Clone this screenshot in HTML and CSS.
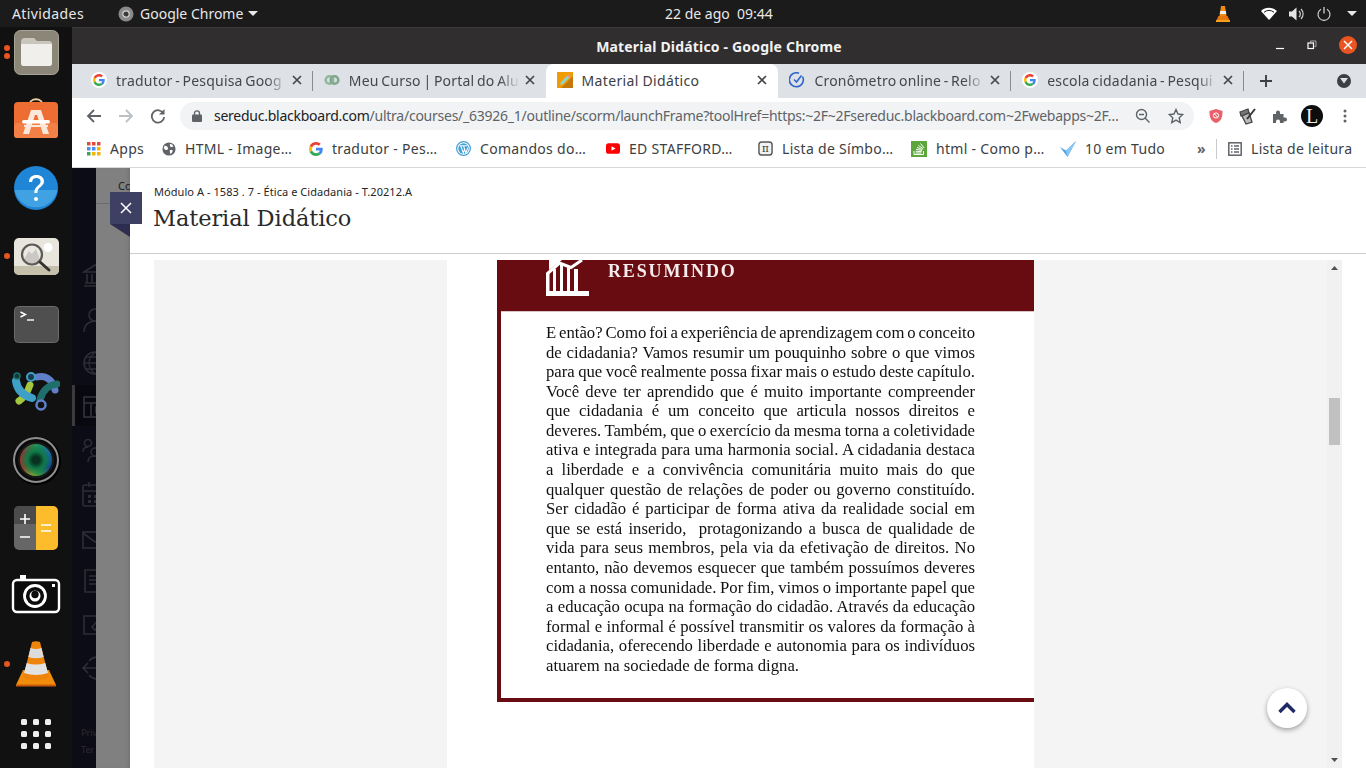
FILE: index.html
```html
<!DOCTYPE html>
<html lang="pt-BR">
<head>
<meta charset="utf-8">
<title>Material Didático - Google Chrome</title>
<link rel="stylesheet" href="styles.css">
</head>
<body>
<svg class="defs" width="0" height="0" aria-hidden="true">
  <defs>
    <symbol id="g" viewBox="0 0 48 48">
      <path fill="#EA4335" d="M24 9.5c3.54 0 6.71 1.22 9.21 3.6l6.85-6.85C35.9 2.38 30.47 0 24 0 14.62 0 6.51 5.38 2.56 13.22l7.98 6.19C12.43 13.72 17.74 9.5 24 9.5z"/>
      <path fill="#4285F4" d="M46.98 24.55c0-1.57-.15-3.09-.38-4.55H24v9.02h12.94c-.58 2.96-2.26 5.48-4.78 7.18l7.73 6c4.51-4.18 7.09-10.36 7.09-17.65z"/>
      <path fill="#FBBC05" d="M10.53 28.59c-.48-1.45-.76-2.99-.76-4.59s.27-3.14.76-4.59l-7.98-6.19C.92 16.46 0 20.12 0 24c0 3.88.92 7.54 2.56 10.78l7.97-6.19z"/>
      <path fill="#34A853" d="M24 48c6.48 0 11.93-2.13 15.89-5.81l-7.73-6c-2.15 1.45-4.92 2.3-8.16 2.3-6.26 0-11.57-4.22-13.47-9.91l-7.98 6.19C6.51 42.62 14.62 48 24 48z"/>
    </symbol>
    <symbol id="x" viewBox="0 0 10 10">
      <path d="M1 1l8 8M9 1l-8 8" stroke="#45474b" stroke-width="1.7" fill="none"/>
    </symbol>
  </defs>
</svg>

<header class="topbar">
  <span class="top-left">Atividades</span>
  <div class="top-app">
    <svg width="16" height="16" viewBox="0 0 16 16"><circle cx="8" cy="8" r="7.5" fill="#8a8a8a"/><circle cx="8" cy="8" r="3.2" fill="#3a3a3a" stroke="#d8d8d8" stroke-width="1.2"/></svg>
    <span>Google Chrome</span>
    <i class="caret"></i>
  </div>
  <div class="top-clock">22 de ago&nbsp; 09:44</div>
  <div class="top-tray">
    <svg class="tray-vlc" width="16" height="18" viewBox="0 0 16 18"><path d="M6 1h4l1.500 10h-7z" fill="#f08a10"/><path d="M5.200 6h5.600l.5 3H4.700z" fill="#eee"/><path d="M3.500 11L1 16.500h14L12.500 11z" fill="#e8770c"/><path d="M1 15h14v2H1z" fill="#f7a01d"/></svg>
    <svg class="tray-wifi" width="16" height="13" viewBox="0 0 16 13"><path d="M0 4a11.500 11.500 0 0 1 16 0l-8 9z" fill="#fff"/><path d="M3 5.300a7.500 7.500 0 0 1 10 0" fill="none" stroke="#1b1b1b" stroke-width="1"/></svg>
    <svg class="tray-vol" width="16" height="14" viewBox="0 0 16 14"><path d="M0 4.500h3L7.500.5v13L3 9.500H0z" fill="#e6e6e6"/><path d="M10 4a4 4 0 0 1 0 6M12 2a7 7 0 0 1 0 10" fill="none" stroke="#d0d0d0" stroke-width="1.200"/></svg>
    <svg class="tray-pow" width="14" height="14" viewBox="0 0 14 14"><path d="M4 2.200a6 6 0 1 0 6 0" fill="none" stroke="#ddd" stroke-width="1.100"/><path d="M7 0v6.500" stroke="#ddd" stroke-width="1.200"/></svg>
    <i class="caret"></i>
  </div>
</header>

<div class="desktop">
  <nav class="dock">
    <div class="dock-item">
      <i class="run-dot d1"></i><i class="run-dot d2"></i>
      <svg width="45" height="45" viewBox="0 0 45 45"><rect x="0.500" y="0.500" width="44" height="44" rx="6" fill="#8b8678"/><rect x="0.500" y="0.500" width="44" height="44" rx="6" fill="none" stroke="#a8a498" stroke-width="1"/><path d="M7 12a4 4 0 0 1 4-4h9l3 3h12a3 3 0 0 1 3 3v19a3 3 0 0 1-3 3H10a3 3 0 0 1-3-3z" fill="#c9c6bd"/><path d="M7 14h31v19a3 3 0 0 1-3 3H10a3 3 0 0 1-3-3z" fill="#f1efeb"/></svg>
    </div>
    <div class="dock-item">
      <svg width="44" height="44" viewBox="0 0 44 44"><path d="M15 8c0-9 14-9 14 0" fill="none" stroke="#e9cfa2" stroke-width="1.800"/><rect x="0" y="4" width="44" height="36" rx="4" fill="#ed6d33"/><rect x="0" y="25" width="44" height="15" rx="3" fill="#f27f46"/><path d="M17 12h10l8 24h-6l-6-19h-2l-6 19H9z" fill="#fbe8da"/><rect x="8" y="22" width="28" height="3.500" rx="1.700" fill="#fff"/><rect x="10" y="27" width="24" height="2" fill="#fbe8da"/></svg>
    </div>
    <div class="dock-item">
      <svg width="44" height="44" viewBox="0 0 44 44"><circle cx="22" cy="22" r="22" fill="#1f85d6"/><path d="M0.500 24h43a22 22 0 0 1-43 0z" fill="#41a2e3"/><path d="M15 16c0-4.500 3-7 7.500-7 4.400 0 7.500 2.500 7.500 6.300 0 5.700-6.700 5.500-6.700 11.700h-3c0-7.500 6.300-7.500 6.300-11.600 0-2-1.700-3.400-4.200-3.400-2.600 0-4.100 1.600-4.300 4z" fill="#fff"/><circle cx="22" cy="33" r="2" fill="#fff"/></svg>
    </div>
    <div class="dock-item">
      <i class="run-dot d3"></i>
      <svg width="45" height="37" viewBox="0 0 45 37"><rect width="45" height="37" rx="5" fill="#e8e6dc"/><path d="M0 28h45v4a5 5 0 0 1-5 5H5a5 5 0 0 1-5-5z" fill="#c5c0ac"/><circle cx="34" cy="9.500" r="4.500" fill="#fff"/><circle cx="18" cy="16.500" r="10" fill="#e9e8e2"/><path d="M10 21l5-8 3 3 4-5 4 11a10 10 0 0 1-16-1z" fill="#c9c8c2"/><circle cx="18" cy="16.500" r="10" fill="none" stroke="#5c5a55" stroke-width="2.200"/><path d="M26 24l9 8" stroke="#33312e" stroke-width="3" stroke-linecap="round"/></svg>
    </div>
    <div class="dock-item">
      <svg width="45" height="37" viewBox="0 0 45 37"><rect x="0.500" y="0.500" width="44" height="36" rx="4" fill="#4f4f4f" stroke="#6a6a6a"/><path d="M6.500 6l5 2.500-5 2.500" fill="none" stroke="#fff" stroke-width="1.400"/><path d="M13 14h7" stroke="#fff" stroke-width="1.400"/></svg>
    </div>
    <div class="dock-item">
      <svg width="48" height="44" viewBox="0 0 48 44"><path d="M18 15c-2 6-5 12-11 16" fill="none" stroke="#a3c83f" stroke-width="7" stroke-linecap="round"/><path d="M25 7c7-2 15 1 18 13" fill="none" stroke="#5f80c9" stroke-width="7" stroke-linecap="round"/><path d="M4 11c1 8 6 14 16 17" fill="none" stroke="#3e9fc9" stroke-width="8" stroke-linecap="round"/><path d="M45 14c-9 1-15 7-17 16" fill="none" stroke="#1f6f6c" stroke-width="7" stroke-linecap="round"/><circle cx="5" cy="6" r="3" fill="#0e3b3a" stroke="#1f6f6c" stroke-width="1.500"/><circle cx="19" cy="7" r="4" fill="#173b4d" stroke="#3e9fc9" stroke-width="2"/><circle cx="29" cy="35" r="4.500" fill="#111" stroke="#5f80c9" stroke-width="2.500"/></svg>
    </div>
    <div class="dock-item">
      <div class="lens"><i></i></div>
    </div>
    <div class="dock-item">
      <svg width="44" height="44" viewBox="0 0 44 44"><path d="M5 0h17v44H5a5 5 0 0 1-5-5V5a5 5 0 0 1 5-5z" fill="#666"/><path d="M5 0h17v18H0V5a5 5 0 0 1 5-5z" fill="#4b4b4b"/><path d="M22 0h17a5 5 0 0 1 5 5v34a5 5 0 0 1-5 5H22z" fill="#fdbc2c"/><path d="M6 13h10M11 8v10M6 31h10" stroke="#fff" stroke-width="1.600"/><path d="M27 19h10M27 25h10" stroke="#fff" stroke-width="1.600"/></svg>
    </div>
    <div class="dock-item">
      <svg width="50" height="44" viewBox="0 0 50 44"><rect x="2" y="6" width="46" height="32" rx="4" fill="#0c0c0c" stroke="#fff" stroke-width="2.400"/><rect x="9" y="1" width="6" height="5" fill="#fff"/><circle cx="24" cy="22" r="10.500" fill="none" stroke="#fff" stroke-width="2.800"/><circle cx="24" cy="22" r="5.500" fill="#fff"/><circle cx="24" cy="20.500" r="3.700" fill="#0c0c0c"/><rect x="41" y="10" width="3" height="3" fill="#fff"/></svg>
    </div>
    <div class="dock-item">
      <i class="run-dot d4"></i>
      <svg width="40" height="46" viewBox="0 0 40 46"><path d="M7 29L0 44h40l-7-15z" fill="#f28d0c"/><path d="M0 43.500h40V45.500H0z" fill="#c9590a"/><path d="M16 1q4-1.500 8 0l9 36q-13 5-26 0z" fill="#ee840a"/><path d="M14.500 7q5.500 2 11 0l2.200 9q-7.700 2.500-15.400 0z" fill="#dcdcdc"/><path d="M10.700 22q9.300 3 18.600 0l2.700 10q-12 4-24 0z" fill="#e2e2e2"/></svg>
    </div>
    <div class="dock-item">
      <div class="apps-grid"><i></i><i></i><i></i><i></i><i></i><i></i><i></i><i></i><i></i></div>
    </div>
  </nav>

  <div class="window">
    <div class="titlebar">
      <span class="title">Material Didático - Google Chrome</span>
      <div class="win-controls">
        <svg width="10" height="10" viewBox="0 0 10 10"><path d="M1 8.500h8" stroke="#fff" stroke-width="1.200"/></svg>
        <svg width="10" height="10" viewBox="0 0 10 10"><rect x="1" y="3" width="5.500" height="5.500" fill="none" stroke="#fff" stroke-width="1.200"/><path d="M3.500 2.500V1h5.500v5.500H7.500" fill="none" stroke="#aaa"/></svg>
        <span class="win-close"><svg width="18" height="18" viewBox="0 0 18 18"><path d="M5 5l8 8M13 5l-8 8" stroke="#fff" stroke-width="1.500"/></svg></span>
      </div>
    </div>

    <div class="tabstrip">
      <div class="tab">
        <span class="fav-disc"><svg width="12" height="12"><use href="#g"/></svg></span>
        <span class="tab-title">tradutor - Pesquisa Goog</span>
        <svg class="tab-x" width="10" height="10"><use href="#x"/></svg>
      </div>
      <div class="tab">
        <svg class="fav" width="16" height="16" viewBox="0 0 16 16"><circle cx="5.500" cy="8" r="3.800" fill="none" stroke="#8fb89f" stroke-width="2.600"/><circle cx="10.500" cy="8" r="3.800" fill="none" stroke="#7fa68f" stroke-width="2.600"/></svg>
        <span class="tab-title">Meu Curso | Portal do Alu</span>
        <svg class="tab-x" width="10" height="10"><use href="#x"/></svg>
      </div>
      <div class="tab tab-active">
        <svg class="fav" width="16" height="16" viewBox="0 0 16 16"><rect width="16" height="16" fill="#f09c05"/><path d="M16 4v12H4z" fill="#c4780a"/><path d="M3 13l1-3 7-7 2 2-7 7z" fill="#8fd6c8"/><path d="M10 4l2 2 1.500-1.500-2-2z" fill="#e88ea0"/></svg>
        <span class="tab-title">Material Didático</span>
        <svg class="tab-x" width="10" height="10"><use href="#x"/></svg>
      </div>
      <div class="tab">
        <svg class="fav" width="16" height="16" viewBox="0 0 16 16"><path d="M13.500 4.500A7 7 0 1 1 10 1.300" fill="none" stroke="#2f66d0" stroke-width="1.600"/><path d="M5 7.500l2.500 2.500 5-6.500" fill="none" stroke="#2f66d0" stroke-width="1.600"/></svg>
        <span class="tab-title">Cronômetro online - Relo</span>
        <svg class="tab-x" width="10" height="10"><use href="#x"/></svg>
      </div>
      <div class="tab">
        <span class="fav-disc"><svg width="12" height="12"><use href="#g"/></svg></span>
        <span class="tab-title">escola cidadania - Pesqui</span>
        <svg class="tab-x" width="10" height="10"><use href="#x"/></svg>
      </div>
      <svg class="tab-new" width="14" height="14" viewBox="0 0 14 14"><path d="M7 1v12M1 7h12" stroke="#3c4043" stroke-width="1.900"/></svg>
      <span class="tab-search"><svg width="8" height="6" viewBox="0 0 8 6"><path d="M0 0h8L4 5.500z" fill="#dee1e6"/></svg></span>
    </div>

    <div class="toolbar">
      <svg class="tb-icon" width="16" height="16" viewBox="0 0 16 16"><path d="M15 8H2M8 2L2 8l6 6" fill="none" stroke="#5f6368" stroke-width="1.800"/></svg>
      <svg class="tb-icon" width="16" height="16" viewBox="0 0 16 16"><path d="M1 8h13M8 2l6 6-6 6" fill="none" stroke="#bcc0c4" stroke-width="1.800"/></svg>
      <svg class="tb-icon" width="16" height="16" viewBox="0 0 16 16"><path d="M13.500 5.500A6.200 6.200 0 1 0 14.200 9" fill="none" stroke="#5f6368" stroke-width="1.800"/><path d="M14.500 1v5.500H9z" fill="#5f6368"/></svg>
      <div class="omnibox">
        <svg class="lock" width="10" height="12" viewBox="0 0 10 12"><rect y="4.500" width="10" height="7.500" rx="1" fill="#5f6368"/><path d="M2.500 5V3.300a2.500 2.500 0 0 1 5 0V5" fill="none" stroke="#5f6368" stroke-width="1.300"/></svg>
        <span class="url"><b>sereduc.blackboard.com</b>/ultra/courses/_63926_1/outline/scorm/launchFrame?toolHref=https:~2F~2Fsereduc.blackboard.com~2Fwebapps~2F…</span>
        <svg class="omni-zoom" width="16" height="16" viewBox="0 0 16 16"><circle cx="6.500" cy="6.500" r="5" fill="none" stroke="#5f6368" stroke-width="1.400"/><path d="M4 6.500h5M10 10l4.500 4.500" stroke="#5f6368" stroke-width="1.400"/></svg>
        <svg class="omni-star" width="16" height="16" viewBox="0 0 16 16"><path d="M8 1.500l2 4.500 4.800.5-3.600 3.200 1 4.800L8 12.100 3.800 14.500l1-4.800L1.200 6.500 6 6z" fill="none" stroke="#5f6368" stroke-width="1.400"/></svg>
      </div>
      <div class="ext-row">
        <svg width="16" height="16" viewBox="0 0 16 16"><path d="M8 1l6.500 2c0 6-1 10-6.500 12C2.500 13 1.500 9 1.500 3z" fill="#e8606a"/><circle cx="8" cy="7.500" r="2.600" fill="none" stroke="#fff" stroke-width="1"/><path d="M6.300 5.800l3.400 3.400" stroke="#fff"/></svg>
        <svg width="18" height="18" viewBox="0 0 18 18"><path d="M1 5l8-3 1 4-8 3z" fill="#777" stroke="#444" stroke-width="1.300"/><path d="M3 9l7-3 3 9-6 2z" fill="#bbb" stroke="#444" stroke-width="1.300"/><path d="M8 12l8-10" stroke="#333" stroke-width="2"/></svg>
        <svg width="16" height="16" viewBox="0 0 16 16"><path d="M1 6h3V4.500a2 2 0 0 1 4 0V6h3.500v3.500H13a2 2 0 0 1 0 4h-1.500V15H8v-1.500a2 2 0 0 0-4 0V15H1z" fill="#5f6368"/></svg>
        <span class="avatar">L</span>
        <svg class="kebab" width="4" height="14" viewBox="0 0 4 14"><circle cx="2" cy="2" r="1.500" fill="#5f6368"/><circle cx="2" cy="7" r="1.500" fill="#5f6368"/><circle cx="2" cy="12" r="1.500" fill="#5f6368"/></svg>
      </div>
    </div>

    <div class="bookmarks">
      <div class="bm">
        <svg width="14" height="14" viewBox="0 0 14 14"><g><rect width="3.500" height="3.500" fill="#e04a3f"/><rect x="5" width="3.500" height="3.500" fill="#e04a3f"/><rect x="10" width="3.500" height="3.500" fill="#e04a3f"/><rect y="5" width="3.500" height="3.500" fill="#4b8bf4"/><rect x="5" y="5" width="3.500" height="3.500" fill="#4b8bf4"/><rect x="10" y="5" width="3.500" height="3.500" fill="#f4b400"/><rect y="10" width="3.500" height="3.500" fill="#3ba55d"/><rect x="5" y="10" width="3.500" height="3.500" fill="#f4b400"/><rect x="10" y="10" width="3.500" height="3.500" fill="#f4b400"/></g></svg>
        <span>Apps</span>
      </div>
      <div class="bm">
        <svg width="14" height="14" viewBox="0 0 16 16"><circle cx="8" cy="8" r="7.500" fill="#5f6368"/><path d="M3 4l3 1 1 2-1 2-2 0-2-2zM9 2l3 1 1 2-3 1-1-2zM9 9l3 0 0 2-2 3-1-2z" fill="#fff"/></svg>
        <span>HTML - Image…</span>
      </div>
      <div class="bm">
        <svg width="14" height="14"><use href="#g"/></svg>
        <span>tradutor - Pes…</span>
      </div>
      <div class="bm">
        <svg width="15" height="15" viewBox="0 0 16 16"><circle cx="8" cy="8" r="7.300" fill="#fff" stroke="#3f9fd8" stroke-width="1.300"/><circle cx="8" cy="8" r="5.500" fill="#3f9fd8"/><path d="M3.800 5h8.400M5 5l2.800 8L9 9M8 5l2.500 8 2-6" fill="none" stroke="#fff" stroke-width="1.100"/></svg>
        <span>Comandos do…</span>
      </div>
      <div class="bm">
        <svg width="14" height="11" viewBox="0 0 16 12"><rect width="16" height="12" rx="3" fill="#f00"/><path d="M6.300 3.300v5.400L11 6z" fill="#fff"/></svg>
        <span>ED STAFFORD…</span>
      </div>
      <div class="bm">
        <svg width="15" height="15" viewBox="0 0 16 16"><rect x="1" y="1" width="14" height="14" rx="3" fill="#f2f2f2" stroke="#555" stroke-width="1.500"/><text class="pi" x="8" y="12" text-anchor="middle">π</text></svg>
        <span>Lista de Símbo…</span>
      </div>
      <div class="bm">
        <svg width="16" height="16" viewBox="0 0 16 16"><rect width="16" height="16" fill="#5ca73c"/><path d="M3 10v3.500h9.500V10" fill="none" stroke="#fff" stroke-width="1"/><path d="M4.500 12h6M4.700 10.200l6 .5M5.100 8.300l6 1.100M6 6.300l5.500 2.300M7.400 4.400l4.800 3.300M9.500 2.500l3.600 4.400" stroke="#fff" stroke-width="1"/></svg>
        <span>html - Como p…</span>
      </div>
      <div class="bm">
        <svg width="16" height="16" viewBox="0 0 16 16"><path d="M0 6l6 3.500L16 0 7.500 16z" fill="#54a5e8"/><path d="M6 9.500L16 0l-8.500 16z" fill="#8cc8f4"/></svg>
        <span>10 em Tudo</span>
      </div>
      <span class="bm-more">»</span>
      <i class="bm-sep"></i>
      <div class="bm">
        <svg width="14" height="14" viewBox="0 0 14 14"><rect x="0.800" y="0.800" width="12.400" height="12.400" fill="none" stroke="#5f6368" stroke-width="1.500"/><path d="M3 4h1.500M6 4h5M3 7h1.500M6 7h5M3 10h1.500M6 10h5" stroke="#5f6368" stroke-width="1.300"/></svg>
        <span>Lista de leitura</span>
      </div>
    </div>

    <main class="viewport">
      <aside class="bb-nav">
        <div class="nav-icons">
          <svg width="26" height="26" viewBox="0 0 26 26"><path d="M2 9L13 2l11 7zM2 23h22M5 11v9M10 11v9M16 11v9M21 11v9M3 20h20" fill="none" stroke="#2c2d36" stroke-width="1.600"/></svg>
          <svg width="26" height="26" viewBox="0 0 26 26"><circle cx="13" cy="8" r="6" fill="none" stroke="#2c2d36" stroke-width="1.600"/><path d="M2 25c0-7 5-11 11-11s11 4 11 11" fill="none" stroke="#2c2d36" stroke-width="1.600"/></svg>
          <svg width="26" height="26" viewBox="0 0 26 26"><circle cx="13" cy="13" r="11" fill="none" stroke="#2c2d36" stroke-width="1.600"/><path d="M2 13h22M13 2c-8 7-8 15 0 22M13 2c8 7 8 15 0 22M4 7h18M4 19h18" fill="none" stroke="#2c2d36" stroke-width="1.300"/></svg>
          <svg class="nav-cur" width="26" height="26" viewBox="0 0 26 26"><path d="M2 3h24v20H2zM2 9h24M9 9v14M14 13h8v6h-8z" fill="none" stroke="#33343e" stroke-width="1.600"/></svg>
          <svg width="26" height="26" viewBox="0 0 26 26"><circle cx="6" cy="6" r="3.500" fill="none" stroke="#2c2d36" stroke-width="1.500"/><circle cx="20" cy="6" r="3.500" fill="none" stroke="#2c2d36" stroke-width="1.500"/><circle cx="13" cy="15" r="4" fill="none" stroke="#2c2d36" stroke-width="1.500"/><path d="M1 15c0-3 2-5 5-5M6 25c0-4 3-6 7-6s7 2 7 6" fill="none" stroke="#2c2d36" stroke-width="1.500"/></svg>
          <svg width="26" height="26" viewBox="0 0 26 26"><rect x="1" y="4" width="24" height="21" rx="2" fill="none" stroke="#2c2d36" stroke-width="1.600"/><path d="M1 10h24M7 1v5M19 1v5" stroke="#2c2d36" stroke-width="1.600"/><path d="M6 14h3v3H6zM12 14h3v3h-3zM18 14h3v3h-3zM6 19h3v3H6zM12 19h3v3h-3z" fill="#2c2d36"/></svg>
          <svg width="26" height="26" viewBox="0 0 26 26"><rect x="1" y="8" width="24" height="16" fill="none" stroke="#2c2d36" stroke-width="1.600"/><path d="M1 9l12 9 12-9" fill="none" stroke="#2c2d36" stroke-width="1.600"/><circle cx="20" cy="4" r="5" fill="#2c2d36"/></svg>
          <svg width="26" height="26" viewBox="0 0 26 26"><path d="M3 2h22v22H3zM7 8h14M7 12h14M7 16h8" fill="none" stroke="#2c2d36" stroke-width="1.600"/></svg>
          <svg width="26" height="26" viewBox="0 0 26 26"><path d="M14 5H2v18h22V12M10 16L22 3l3 3-12 13z" fill="none" stroke="#2c2d36" stroke-width="1.600"/></svg>
          <svg width="26" height="26" viewBox="0 0 26 26"><path d="M7 6a11 11 0 1 1 0 14M1 13h16M6 8l-5 5 5 5" fill="none" stroke="#2c2d36" stroke-width="1.600"/></svg>
        </div>
        <div class="nav-legal"><span>Priv</span><span>Ter</span></div>
      </aside>
      <div class="scrim">
        <span class="scrim-text">Co</span>
        <i class="scrim-line"></i>
      </div>
      <section class="panel">
        <header class="panel-head">
          <div class="crumb">Módulo A - 1583 . 7 - Ética e Cidadania - T.20212.A</div>
          <h1 class="panel-title">Material Didático</h1>
        </header>
        <div class="panel-body">
          <div class="doc-area">
            <article class="page">
              <div class="card">
                <div class="card-head">
                  <svg class="card-icon" width="44" height="37" viewBox="0 0 44 37"><path d="M0 31h43v5H0z" fill="#fff"/><path d="M0 13h3.500v18H0zM7 9h3v22H7zM14 5h3v26h-3zM21 7h3v24h-3zM28 9h4v22h-4z" fill="#fff"/><path d="M1 14L13.500 3 25 7.500 36 0" fill="none" stroke="#fff" stroke-width="3"/><path d="M3 0h13L3 10z" fill="#fff"/></svg>
                  <span class="card-title">RESUMINDO</span>
                </div>
                <div class="card-body">
                  <p>E então? Como foi a experiência de aprendizagem com o conceito</p>
                  <p>de cidadania? Vamos resumir um pouquinho sobre o que vimos</p>
                  <p>para que você realmente possa fixar mais o estudo deste capítulo.</p>
                  <p>Você deve ter aprendido que é muito importante compreender</p>
                  <p>que cidadania é um conceito que articula nossos direitos e</p>
                  <p>deveres. Também, que o exercício da mesma torna a coletividade</p>
                  <p>ativa e integrada para uma harmonia social. A cidadania destaca</p>
                  <p>a liberdade e a convivência comunitária muito mais do que</p>
                  <p>qualquer questão de relações de poder ou governo constituído.</p>
                  <p>Ser cidadão é participar de forma ativa da realidade social em</p>
                  <p>que se está inserido,&nbsp; protagonizando a busca de qualidade de</p>
                  <p>vida para seus membros, pela via da efetivação de direitos. No</p>
                  <p>entanto, não devemos esquecer que também possuímos deveres</p>
                  <p>com a nossa comunidade. Por fim, vimos o importante papel que</p>
                  <p>a educação ocupa na formação do cidadão. Através da educação</p>
                  <p>formal e informal é possível transmitir os valores da formação à</p>
                  <p>cidadania, oferecendo liberdade e autonomia para os indivíduos</p>
                  <p class="last">atuarem na sociedade de forma digna.</p>
                </div>
              </div>
            </article>
          </div>
          <div class="scrollbar">
            <svg width="7" height="4" viewBox="0 0 7 4"><path d="M0 4h7L3.500 0z" fill="#505050"/></svg>
            <i class="thumb"></i>
            <svg width="7" height="4" viewBox="0 0 7 4"><path d="M0 0h7L3.500 4z" fill="#505050"/></svg>
          </div>
        </div>
        <button class="to-top" type="button" aria-label="Voltar ao topo"><svg width="18" height="12" viewBox="0 0 18 12"><path d="M1.500 10L9 2.500 16.500 10" fill="none" stroke="#1e2a68" stroke-width="3.400"/></svg></button>
      </section>
      <button class="close-btn" type="button" aria-label="Fechar"><svg width="12" height="12" viewBox="0 0 12 12"><path d="M1 1l10 10M11 1L1 11" stroke="#fff" stroke-width="1.500"/></svg></button>
    </main>
  </div>
</div>
</body>
</html>
```

FILE: styles.css
```css
* { box-sizing: border-box; }
html, body { margin: 0; padding: 0; }
body {
  width: 1366px;
  height: 768px;
  overflow: hidden;
  background: #111;
  font-family: "Noto Sans", "Open Sans", sans-serif;
  display: flex;
  flex-direction: column;
}
.defs { position: absolute; }

/* Top bar */
.topbar {
  flex: 0 0 27px;
  height: 27px;
  background: #1b1b1b;
  color: #e8e8e8;
  font-size: 14px;
  display: grid;
  grid-template-columns: 106px 540px 1fr auto;
  align-items: center;
  padding-left: 12px;
}
.top-left { white-space: nowrap; letter-spacing: 0.4px; }
.top-app { display: flex; align-items: center; gap: 6px; }
.top-app .caret { margin-left: -1.5px; }
.top-clock { font-size: 14px; padding-left: 7px; }
.top-tray { display: flex; align-items: center; padding-right: 9px; }
.tray-vlc { margin-right: 30px; }
.tray-wifi { margin-right: 12px; }
.tray-vol { margin-right: 12px; }
.tray-pow { margin-right: 12px; }
.caret {
  display: inline-block;
  width: 0; height: 0;
  border-left: 5px solid transparent;
  border-right: 5px solid transparent;
  border-top: 5px solid #e8e8e8;
  margin-left: 4px;
}

.desktop { flex: 1; display: flex; min-height: 0; }

/* Dock */
.dock {
  flex: 0 0 72px;
  background: #111;
  display: flex;
  flex-direction: column;
  gap: 24px;
  padding-top: 3px;
}
.dock-item {
  position: relative;
  height: 44px;
  display: flex;
  justify-content: center;
  align-items: center;
}
.dock-item svg { display: block; flex: none; }
.run-dot {
  position: absolute;
  left: 4px;
  width: 6px; height: 6px;
  border-radius: 50%;
  background: #e95420;
}
.d1 { top: 15px; }
.d2 { top: 23px; }
.d3 { top: 19px; }
.d4 { top: 19px; }
.lens {
  width: 46px; height: 46px;
  flex: none;
  border-radius: 50%;
  background: #0a0a0a;
  border: 2px solid #8f8f8f;
  box-shadow: 1px 1px 0 1px #000;
  padding: 3px;
}
.lens i {
  display: block;
  width: 100%; height: 100%;
  border-radius: 50%;
  border: 2px solid #1a1a1a;
  background:
    radial-gradient(circle, #08321f 0 16%, #0f7a48 38%, rgba(15, 122, 72, .55) 60%, transparent 76%),
    conic-gradient(#2aa55a, #2060d0 60deg, #1a2fb0 120deg, #3f9f40 165deg, #a8b030 195deg, #c42a20 240deg, #b52030 300deg, #2aa55a);
}
.apps-grid {
  display: grid;
  grid-template-columns: repeat(3, 6px);
  gap: 6px;
  padding-top: 4px;
}
.apps-grid i { width: 6px; height: 6px; border-radius: 1.500px; background: #eee; }

/* Chrome window */
.window { flex: 1; min-width: 0; display: flex; flex-direction: column; }
.titlebar {
  flex: 0 0 37px;
  background: #302e2f;
  border-top: 1px solid #3a3a3a;
  display: grid;
  grid-template-columns: 1fr;
  align-items: center;
  position: relative;
}
.title {
  text-align: center;
  font-size: 14px;
  font-weight: 700;
  letter-spacing: 0.18px;
  color: #f2f2f2;
}
.win-controls {
  position: absolute;
  right: 9px;
  top: 8px;
  display: flex;
  align-items: center;
  gap: 22px;
}
.win-close {
  width: 18px; height: 18px;
  border-radius: 50%;
  background: #e95420;
  display: flex;
}

.tabstrip {
  flex: 0 0 34px;
  background: #dee1e6;
  display: flex;
  align-items: stretch;
  padding-left: 8px;
  position: relative;
}
.tab {
  flex: 0 0 232.800px;
  min-width: 0;
  display: flex;
  align-items: center;
  padding: 0 11px 2px 11px;
  gap: 9px;
  font-size: 14px;
  letter-spacing: 0.2px;
  word-spacing: -1.2px;
  color: #45474b;
  position: relative;
  white-space: nowrap;
}
.tab::after {
  content: "";
  position: absolute;
  right: 0;
  top: 7px;
  bottom: 7px;
  width: 1px;
  background: #888b90;
}
.tab:nth-child(2)::after, .tab-active::after { display: none; }
.tab-active {
  background: #fff;
  border-radius: 8px 8px 0 0;
  color: #3c4043;
  letter-spacing: 0.33px;
  word-spacing: 0;
}
.fav { flex: none; }
.fav-disc {
  flex: none;
  width: 16px; height: 16px;
  border-radius: 50%;
  background: #fff;
  display: flex;
  align-items: center;
  justify-content: center;
}
.tab-title {
  flex: 1;
  min-width: 0;
  overflow: hidden;
  -webkit-mask-image: linear-gradient(90deg, #000 88%, transparent 100%);
  mask-image: linear-gradient(90deg, #000 88%, transparent 100%);
}
.tab-active .tab-title { -webkit-mask-image: none; mask-image: none; }
.tab-x { flex: none; margin-left: -4px; }
.tab-new { align-self: center; margin-left: 15px; }
.tab-search {
  align-self: center;
  width: 14px; height: 14px;
  margin-left: 64px;
  border-radius: 50%;
  background: #3c4043;
  display: flex;
  align-items: center;
  justify-content: center;
}

.toolbar {
  flex: 0 0 35px;
  background: #fff;
  display: flex;
  align-items: center;
  padding-left: 14px;
  gap: 16px;
}
.tb-icon { flex: none; }
.omnibox {
  flex: 0 0 1014px;
  height: 28px;
  margin-left: -2px;
  background: #f1f3f4;
  border-radius: 14px;
  display: flex;
  align-items: center;
  padding-left: 12px;
  font-size: 14px;
  color: #5f6368;
}
.lock { flex: none; margin-right: 12px; }
.url { flex: 0 0 905px; min-width: 0; white-space: nowrap; overflow: hidden; letter-spacing: -0.25px; }
.url b { font-weight: 400; color: #202124; }
.omni-zoom { flex: none; margin-left: 16px; }
.omni-star { flex: none; margin-left: 17px; }
.ext-row {
  display: flex;
  align-items: center;
  gap: 15px;
  margin-left: -2px;
}
.avatar {
  width: 22px; height: 22px;
  margin-left: -2px;
  border-radius: 50%;
  background: #0d0d0d;
  color: #eee;
  font-family: "Liberation Serif", serif;
  font-size: 20px;
  line-height: 22px;
  text-align: center;
}
.kebab { margin-left: 5px; }

.bookmarks {
  flex: 0 0 35px;
  background: #fff;
  border-bottom: 1px solid #d8d8d8;
  display: grid;
  grid-template-columns: 75px 147px 147px 150px 152px 153px 149px 137px 19px 12px 1fr;
  align-items: center;
  padding: 0 0 3px 15px;
  font-size: 14px;
  letter-spacing: 0.3px;
  color: #3c4043;
}
.bm { display: flex; align-items: center; gap: 9px; white-space: nowrap; }
.bm svg { flex: none; }
.pi { font-family: "DejaVu Serif", serif; font-size: 11px; fill: #333; }
.bm-more { font-size: 14px; font-weight: 700; color: #5f6368; }
.bm-sep { width: 1px; height: 20px; background: #c8cacd; }

/* Page */
.viewport { flex: 1; min-height: 0; display: flex; position: relative; overflow: hidden; background: #fff; }
.bb-nav {
  flex: 0 0 24px;
  background: #0c0c17;
  overflow: hidden;
  position: relative;
  padding: 95px 0 0 10px;
}
.nav-icons { display: flex; flex-direction: column; gap: 17.500px; width: 26px; }
.nav-icons svg { display: block; flex: none; }
.nav-cur { position: relative; }
.bb-nav::before {
  content: "";
  position: absolute;
  left: 0; top: 217px;
  width: 24px; height: 41px;
  background: #08080f;
  border-left: 3px solid #3b3b3f;
}
.nav-legal {
  position: absolute;
  left: 9px; top: 558px;
  display: flex;
  flex-direction: column;
  gap: 3px;
  font-size: 9.500px;
  letter-spacing: -0.2px;
  line-height: 14px;
  color: #2a2a33;
  white-space: nowrap;
}
.scrim {
  flex: 0 0 34px;
  background: #808080;
  position: relative;
  box-shadow: inset -4px 0 4px -3px #6e6e6e;
}
.scrim-text {
  position: absolute;
  left: 22px; top: 10px;
  font-size: 11px;
  color: #1c1c1c;
}
.scrim-line {
  position: absolute;
  left: 0; top: 35px;
  width: 14px; height: 1px;
  background: #6c6c6c;
}
.panel { flex: 1; min-width: 0; background: #fff; display: flex; flex-direction: column; position: relative; }
.panel-head {
  flex: 0 0 86px;
  border-bottom: 1px solid #cdcdcd;
  padding: 16px 0 0 24px;
  color: #262626;
}
.crumb { font-size: 11px; line-height: 16px; letter-spacing: 0.06px; }
.panel-title {
  margin: 3px 0 0 -1px;
  font-family: "DejaVu Serif", "Liberation Serif", serif;
  font-size: 22.500px;
  line-height: 31px;
  font-weight: 400;
  letter-spacing: -0.100px;
  color: #2a2a2a;
}
.panel-body {
  flex: 1;
  min-height: 0;
  display: flex;
  padding: 6px 24px 0;
}
.doc-area {
  flex: 1;
  background: #f4f4f4;
  padding-left: 293px;
  min-width: 0;
}
.page { width: 587px; height: 100%; background: #fff; padding: 0 0 0 50px; }
.card {
  border-left: 4px solid #680c11;
  border-bottom: 4px solid #680c11;
  height: 442px;
  display: flex;
  flex-direction: column;
}
.card-head {
  flex: 0 0 51px;
  background: #680c11;
  display: flex;
  align-items: flex-start;
  padding-left: 45px;
}
.card-icon { flex: none; display: block; filter: blur(0.3px); }
.card-title {
  margin-left: 18px;
  margin-top: 1px;
  font-family: "Liberation Serif", serif;
  font-weight: 700;
  font-size: 18px;
  line-height: 20px;
  letter-spacing: 1.85px;
  color: #f4ecec;
  filter: blur(0.3px);
}
.card-body {
  flex: 1;
  border-top: 1px solid #d8c4c4;
  padding: 11px 59px 0 45px;
  font-family: "Liberation Serif", serif;
  font-size: 16.700px;
  line-height: 19.590px;
  color: #111;
  filter: blur(0.3px);
}
.card-body p {
  margin: 0;
  text-align: justify;
  text-align-last: justify;
  word-spacing: -3px;
  height: 19.590px;
  overflow: hidden;
}
.card-body p.last { text-align-last: left; word-spacing: 0; }
.scrollbar {
  flex: 0 0 15px;
  background: #f1f1f1;
  position: relative;
  display: flex;
  flex-direction: column;
  align-items: center;
  justify-content: space-between;
  padding: 6px 0 6px;
}
.scrollbar svg { display: block; }
.thumb {
  position: absolute;
  left: 2px; top: 138px;
  width: 11px; height: 47px;
  background: #c1c1c1;
}
.to-top {
  position: absolute;
  left: 1137px; top: 520px;
  width: 40px; height: 40px;
  border: 0;
  border-radius: 50%;
  background: #fff;
  box-shadow: 0 2px 5px rgba(0, 0, 0, .35);
  display: flex;
  align-items: center;
  justify-content: center;
  padding: 0;
}
.close-btn {
  position: absolute;
  left: 38px; top: 24px;
  width: 32px; height: 32px;
  border: 0;
  padding: 0;
  background: #3e4063;
  display: flex;
  align-items: center;
  justify-content: center;
}
.close-btn::after {
  content: "";
  position: absolute;
  left: 0; top: 32px;
  border-top: 13px solid #2d2e4f;
  border-left: 20px solid transparent;
}
```
